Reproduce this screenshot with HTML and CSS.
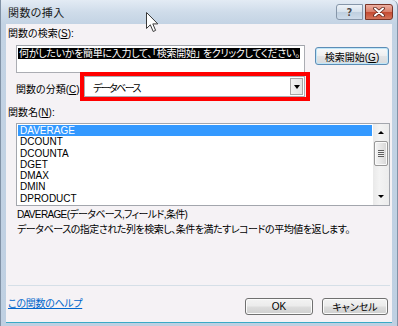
FILE: index.html
```html
<!DOCTYPE html>
<html lang="ja">
<head>
<meta charset="utf-8">
<title>関数の挿入</title>
<link rel="stylesheet" href="styles.css">
</head>
<body>
<div class="window">
  <div class="titlebar">
    <span class="title">関数の挿入</span>
    <div class="caption-buttons">
      <span class="cap-btn help">?</span>
      <span class="cap-btn close">
        <svg width="12" height="10" viewBox="0 0 12 10">
          <path d="M2 1.5 L10 8.5 M10 1.5 L2 8.5" stroke="#5a2218" stroke-width="3.6" stroke-linecap="round" fill="none"/>
          <path d="M2 1.5 L10 8.5 M10 1.5 L2 8.5" stroke="#ffffff" stroke-width="2" stroke-linecap="round" fill="none"/>
        </svg>
      </span>
    </div>
  </div>
  <div class="client">
    <div class="label">関数の検索(<u>S</u>):</div>
    <div class="search-row">
      <div class="search-box"><span class="sel">何がしたいかを簡単に入力して、「検索開始」 をクリックしてください。</span></div>
      <button class="btn default">検索開始(<u>G</u>)</button>
    </div>
    <div class="cat-row">
      <span class="cat-label">関数の分類(<u>C</u>):</span>
      <div class="combo">
        <span class="combo-text">データベース</span>
        <span class="combo-arrow"><span class="tri-down"></span></span>
      </div>
    </div>
    <div class="label name-label">関数名(<u>N</u>):</div>
    <div class="listbox">
      <ul class="items">
        <li class="selected">DAVERAGE</li>
        <li>DCOUNT</li>
        <li>DCOUNTA</li>
        <li>DGET</li>
        <li>DMAX</li>
        <li>DMIN</li>
        <li>DPRODUCT</li>
      </ul>
      <div class="scrollbar">
        <span class="sb-arrow"><span class="tri-up small"></span></span>
        <span class="thumb"><span class="grip"></span></span>
        <span class="sb-track"></span>
        <span class="sb-arrow"><span class="tri-down small"></span></span>
      </div>
    </div>
    <div class="desc">
      <div class="desc-line">DAVERAGE(データベース,フィールド,条件)</div>
      <div class="desc-line">データベースの指定された列を検索し、条件を満たすレコードの平均値を返します。</div>
    </div>
    <div class="spacer"></div>
    <div class="separator"></div>
    <div class="footer">
      <a class="help-link" href="#">この関数のヘルプ</a>
      <div class="footer-buttons">
        <button class="btn ok">OK</button>
        <button class="btn cancel">キャンセル</button>
      </div>
    </div>
  </div>
  <div class="bottom-edge"></div>
  <svg class="cursor" width="13" height="21" viewBox="0 0 13 21">
    <path d="M0.5 0.5 L0.5 16.5 L4.3 12.8 L7.2 19.5 L9.6 18.4 L6.8 11.9 L11.8 11.9 Z" fill="#ffffff" stroke="#3a3a3a" stroke-width="1" stroke-linejoin="round"/>
  </svg>
</div>
</body>
</html>
```
FILE: styles.css
```css
* { box-sizing: border-box; }
html, body { margin: 0; padding: 0; }
body {
  width: 398px;
  height: 326px;
  overflow: hidden;
  background: #eef3f8;
  font-family: "Liberation Sans", "Noto Sans CJK JP", sans-serif;
  font-size: 10px;
  font-feature-settings: "palt";
  color: #000;
}
u { text-decoration: underline; text-underline-offset: 1px; }

.window {
  position: relative;
  width: 398px;
  height: 326px;
  display: flex;
  flex-direction: column;
  padding: 0 5px;
  border-left: 1px solid #8192a6;
  border-right: 1px solid #8192a6;
  border-top-right-radius: 6px;
  background: linear-gradient(180deg, #e3ebf4 0px, #cfdcea 12px, #c3d3e4 24px, #bfd0e2 100%);
}

.titlebar {
  height: 24px;
  display: flex;
  align-items: center;
  justify-content: space-between;
}
.title {
  font-size: 11px;
  padding-left: 2px;
  letter-spacing: 0.4px;
  color: #1b1b1b;
}
.caption-buttons {
  align-self: flex-start;
  margin-top: 4px;
  margin-right: -1px;
  display: flex;
  gap: 2px;
}
.cap-btn {
  height: 16px;
  display: flex;
  align-items: center;
  justify-content: center;
  border: 1px solid #8696a9;
}
.help {
  width: 27px;
  border-radius: 3px 0 0 3px;
  background: linear-gradient(180deg, #eef3f8 0%, #d6e1ec 48%, #bfcfdf 52%, #cddbea 100%);
  font-family: "DejaVu Sans", sans-serif;
  font-size: 10px;
  font-weight: bold;
  color: #4a4a4a;
  text-shadow: 0 0 1px #ffffff;
}
.close {
  width: 28px;
  border-color: #7a3426;
  border-radius: 0 3px 3px 0;
  background: linear-gradient(180deg, #eeb0a2 0%, #d9806b 48%, #c44a31 52%, #d4745a 100%);
}

.client {
  height: 298px;
  background: #f5f2f5;
  display: flex;
  flex-direction: column;
  padding: 4px 0 7px 2px;
}

.label {
  height: 12px;
  line-height: 12px;
  white-space: nowrap;
}

.search-row {
  display: flex;
  align-items: flex-start;
  margin-top: 5px;
  padding-left: 8px;
}
.search-box {
  width: 289px;
  height: 28px;
  border: 1px solid #abadb3;
  border-top-color: #a0a4ab;
  background: #ffffff;
  padding: 2px 0 0 1px;
  overflow: hidden;
}
.sel {
  display: inline-block;
  white-space: nowrap;
  background: #000000;
  color: #ffffff;
  height: 11px;
  line-height: 11px;
  padding-left: 1px;
  letter-spacing: -0.3px;
}

.btn {
  font: inherit;
  font-feature-settings: "palt";
  color: #000;
  height: 17px;
  padding: 0;
  border: 1px solid #707070;
  border-radius: 3px;
  background: linear-gradient(180deg, #f3f3f3 0%, #ebebeb 48%, #dddddd 52%, #cfcfcf 100%);
  box-shadow: inset 0 0 0 1px #fbfbfb;
}
.btn.default {
  width: 74px;
  height: 18px;
  margin-left: 10px;
  margin-top: 2px;
  border-color: #5d8db6;
  box-shadow: inset 0 0 0 1px #bfe6f8;
  background: linear-gradient(180deg, #f7f9fa 0%, #eeeff0 48%, #e2e4e6 52%, #d8dadc 100%);
}

.cat-row {
  display: flex;
  align-items: center;
  margin-top: 3px;
  padding-left: 8px;
  height: 21px;
}
.cat-label {
  width: 68px;
  white-space: nowrap;
  padding-top: 3px;
}
.combo {
  position: relative;
  width: 221px;
  height: 21px;
  border: 1px solid #abadb3;
  background: #ffffff;
  display: flex;
  align-items: center;
  justify-content: space-between;
  padding-left: 8px;
}
.combo::after {
  content: "";
  position: absolute;
  top: -5px;
  left: -5px;
  right: -6px;
  bottom: -5px;
  border: 4px solid #ff0000;
}
.combo-text { letter-spacing: -1.6px; padding-top: 1px; }
.combo-arrow {
  width: 13px;
  height: 17px;
  margin-right: 1px;
  border: 1px solid #a7a7a7;
  background: linear-gradient(90deg, #f2f2f2, #e4e4e4);
  display: flex;
  align-items: center;
  justify-content: center;
}
.tri-down {
  width: 0;
  height: 0;
  border-left: 3.5px solid transparent;
  border-right: 3.5px solid transparent;
  border-top: 4px solid #000;
}
.tri-up {
  width: 0;
  height: 0;
  border-left: 3.5px solid transparent;
  border-right: 3.5px solid transparent;
  border-bottom: 4px solid #000;
}
.tri-up.small, .tri-down.small { border-left-width: 3px; border-right-width: 3px; }
.tri-up.small { border-bottom-width: 3px; }
.tri-down.small { border-top-width: 3px; }

.name-label { margin-top: 10px; }

.listbox {
  margin-top: 4px;
  margin-left: 8px;
  width: 374px;
  height: 83px;
  border: 1px solid #a3a6ad;
  background: #ffffff;
  display: flex;
}
.items {
  list-style: none;
  margin: 0;
  padding: 1px;
  width: 356px;
}
.items li {
  height: 11.3px;
  line-height: 11.3px;
  padding-left: 2px;
  white-space: nowrap;
}
.items li.selected {
  background: #3399ff;
  color: #ffffff;
  height: 11px;
  line-height: 11px;
  margin-bottom: 0.3px;
}

.scrollbar {
  width: 16px;
  display: flex;
  flex-direction: column;
  align-items: center;
  background: linear-gradient(90deg, #e9e9e9, #f3f3f3 40%, #ececec);
}
.sb-arrow {
  height: 17px;
  width: 100%;
  display: flex;
  align-items: center;
  justify-content: center;
}
.thumb {
  width: 14px;
  height: 25px;
  border: 1px solid #979797;
  border-radius: 2px;
  background: linear-gradient(90deg, #f4f4f4, #e6e6e6 50%, #d6d6d6);
  box-shadow: inset 0 0 0 1px #fafafa;
  display: flex;
  align-items: center;
  justify-content: center;
}
.grip {
  width: 6px;
  height: 7px;
  background: repeating-linear-gradient(180deg, #5e5e5e 0px, #5e5e5e 1px, #f0f0f0 1px, #f0f0f0 2px);
}
.sb-track { flex: 1; }

.desc {
  margin-top: 1px;
  margin-left: 9px;
}
.desc-line {
  line-height: 15px;
  white-space: nowrap;
  letter-spacing: -0.5px;
}
.desc-line:first-child { letter-spacing: -0.65px; }
.desc-line:last-child { letter-spacing: -0.47px; }

.spacer { flex: 1; }

.separator {
  width: 382px;
  height: 1px;
  background: #d5dfe7;
  margin-bottom: 12px;
}

.footer {
  height: 17px;
  display: flex;
  justify-content: space-between;
  align-items: flex-start;
  padding-right: 4px;
}
.help-link {
  color: #0066cc;
  text-decoration: underline;
  line-height: 12px;
  letter-spacing: -0.3px;
}
.footer-buttons {
  display: flex;
  gap: 9px;
}
.btn.ok { width: 68px; }
.btn.cancel { width: 66px; }

.bottom-edge {
  height: 1px;
  background: #3aaac6;
}

.cursor {
  position: absolute;
  left: 145px;
  top: 12px;
}
```
